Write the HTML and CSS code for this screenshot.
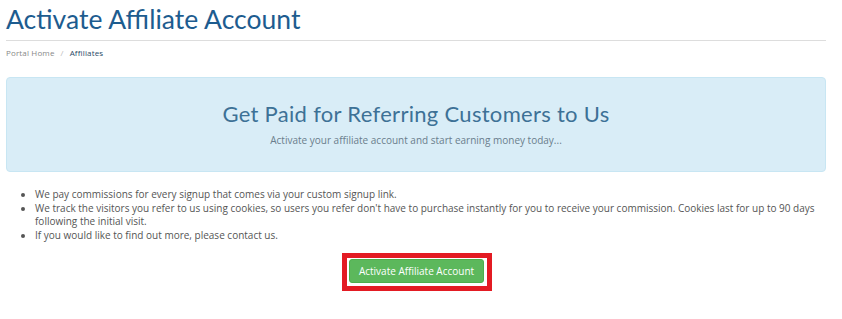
FILE: index.html
```html
<!DOCTYPE html>
<html lang="en">
<head>
<meta charset="utf-8">
<title>Activate Affiliate Account</title>
<link rel="stylesheet" href="styles.css">
</head>
<body>
<div class="page">
  <div class="header">
    <h1 class="title">Activate Affiliate Account</h1>
  </div>
  <ol class="crumbs">
    <li class="crumb"><a class="crumb-link" href="#">Portal Home</a></li>
    <li class="crumb crumb-active">Affiliates</li>
  </ol>
  <div class="hero">
    <h2 class="hero-title">Get Paid for Referring Customers to Us</h2>
    <p class="hero-sub">Activate your affiliate account and start earning money today...</p>
  </div>
  <ul class="points">
    <li>We pay commissions for every signup that comes via your custom signup link.</li>
    <li>We track the visitors you refer to us using cookies, so users you refer don't have to purchase instantly for you to receive your commission. Cookies last for up to 90 days following the initial visit.</li>
    <li>If you would like to find out more, please contact us.</li>
  </ul>
  <div class="actions">
    <span class="highlight"><button class="btn-activate" type="button">Activate Affiliate Account</button></span>
  </div>
</div>
</body>
</html>
```
FILE: styles.css
```css
html, body {
  margin: 0;
  padding: 0;
  background: #ffffff;
}
.page {
  width: 820px;
  padding: 0 16px 0 6px;
  font-family: "Open Sans", "Liberation Sans", sans-serif;
  color: #555555;
}
.header {
  border-bottom: 1px solid #dddddd;
  height: 40px;
}
.title {
  margin: 0;
  padding-top: 3px;
  font-family: "Lato", "Open Sans", sans-serif;
  font-weight: 400;
  font-size: 26.5px;
  line-height: 32px;
  color: #1d5c8f;
}
.crumbs {
  list-style: none;
  margin: 0;
  padding: 6px 0 0 0;
  display: flex;
  font-family: "Open Sans", sans-serif;
  font-size: 8px;
  line-height: 12px;
  letter-spacing: 0.15px;
}
.crumb-link {
  color: #888888;
  text-decoration: none;
}
.crumb + .crumb::before {
  content: "/";
  color: #bbbbbb;
  padding: 0 6px;
}
.crumb-active {
  color: #2a4a66;
}
.hero {
  margin-top: 18px;
  height: 93px;
  background: #d9edf7;
  border: 1px solid #c8e6f3;
  border-radius: 4px;
  text-align: center;
  box-sizing: content-box;
}
.hero-title {
  margin: 0;
  padding-top: 22px;
  font-family: "Lato", "Open Sans", sans-serif;
  font-weight: 400;
  font-size: 22px;
  line-height: 28px;
  letter-spacing: 0.3px;
  color: #3d7196;
}
.hero-sub {
  margin: 5px 0 0 0;
  font-size: 10px;
  line-height: 14px;
  color: #6a7d8c;
}
.points {
  margin: 16px 0 0 0;
  padding-left: 29px;
  font-size: 10px;
  line-height: 13.5px;
  color: #555555;
}
.actions {
  display: flex;
  justify-content: center;
  margin-top: 11px;
  padding-left: 2px;
}
.highlight {
  display: inline-flex;
  border: 5px solid #e31b23;
  padding: 1px 3px 3px 2px;
}
.btn-activate {
  width: 135px;
  height: 24px;
  border: 1px solid #4cae4c;
  border-radius: 3px;
  background: #5cb85c;
  color: #ffffff;
  font-family: "Open Sans", sans-serif;
  font-size: 10px;
  padding: 0;
  cursor: pointer;
}
```
